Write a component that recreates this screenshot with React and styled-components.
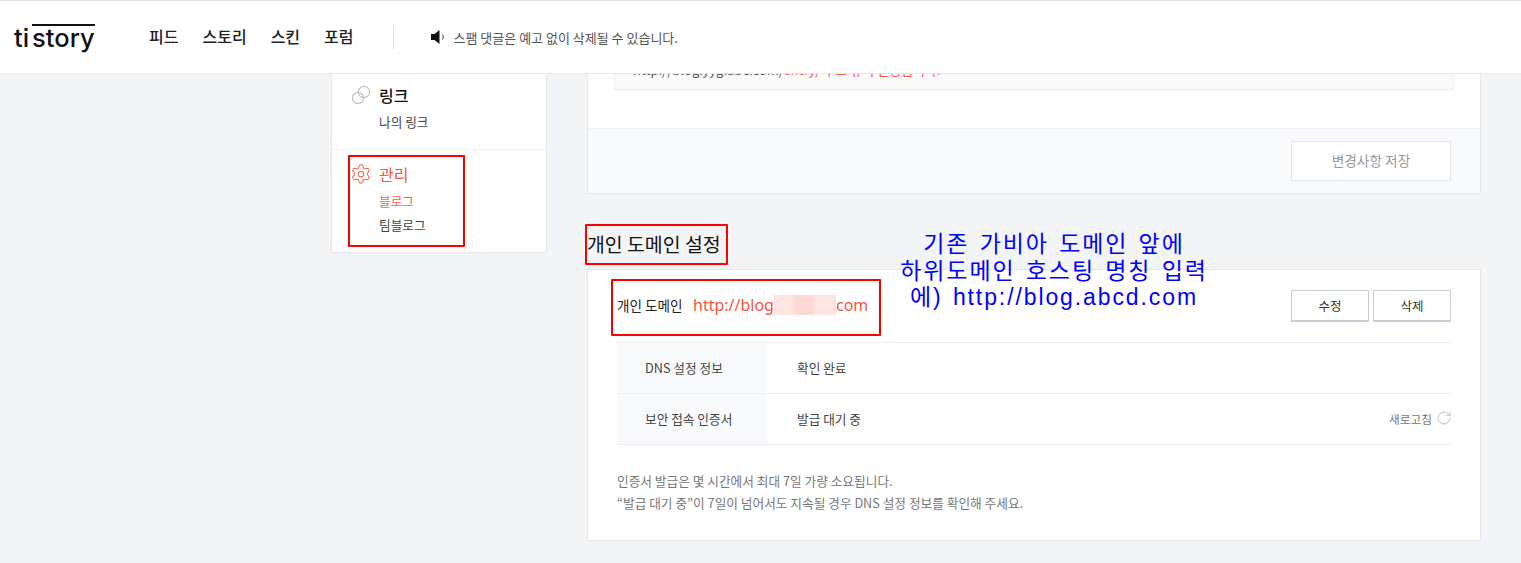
import React from "react";
import styled, { createGlobalStyle } from "styled-components";
import { RotateCw, Settings } from "lucide-react";

const GlobalStyle = createGlobalStyle`
    html, body {
        margin: 0;
        padding: 0;
        background: #f3f4f6;
    }
    * {
        box-sizing: border-box;
    }
`;

const FONT = `"Noto Sans CJK KR", "Noto Sans", sans-serif`;

const Page = styled.div`
    position: relative;
    width: 1521px;
    height: 563px;
    overflow: hidden;
    font-family: ${FONT};
    background: #f3f4f6;
`;

//header
const Header = styled.header`
    position: absolute;
    top: 0;
    left: 0;
    z-index: 5;
    width: 100%;
    height: 74px;
    display: flex;
    align-items: center;
    padding: 0 0 0 14px;
    background: #fff;
    border-top: 1px solid #e2e2e2;
    border-bottom: 1px solid #e6e7ea;
`;

const Logo = styled.div`
    width: 135px;
    font-family: "Inter", sans-serif;
    font-size: 25.5px;
    font-weight: 500;
    line-height: 24px;
    color: #111;
`;

const LogoBar = styled.span`
    display: inline-block;
    border-top: 2px solid #111;
    margin-left: 3px;
`;

const Nav = styled.nav`
    display: flex;
    gap: 24px;
    padding: 0 39px 2px 0;
    font-size: 16px;
    font-weight: 500;
    color: #222;
`;

const Divider = styled.div`
    width: 1px;
    height: 24px;
    background: #dfe0e3;
    margin-right: 37px;
`;

const Notice = styled.div`
    display: flex;
    align-items: center;
    gap: 9px;
    font-size: 13px;
    color: #555;
`;

//main layout
const Main = styled.main`
    display: flex;
    align-items: flex-start;
    gap: 40px;
    padding-left: 331px;
`;

const Sidebar = styled.aside`
    width: 216px;
    height: 253px;
    padding-top: 74px;
    background: #fff;
    border: 1px solid #e4e7ee;
    border-top: 0;
`;

const SideGroup = styled.div`
    height: ${(p) => p.$height}px;
    padding: ${(p) => p.$top}px 0 0 19px;
    border-bottom: ${(p) => (p.$last ? "0" : "1px solid #eef0f3")};
`;

const SideTitle = styled.div`
    display: flex;
    align-items: center;
    gap: 8px;
    height: 24px;
    font-size: 16px;
    font-weight: ${(p) => (p.$active ? 400 : 500)};
    color: ${(p) => (p.$active ? "#f9543c" : "#111")};
`;

const SideLink = styled.div`
    margin: ${(p) => p.$gap}px 0 0 28px;
    height: 16px;
    line-height: 16px;
    font-size: 12.7px;
    color: ${(p) => (p.$active ? "#f9603f" : "#444")};
`;

const Content = styled.div`
    width: 894px;
    display: flex;
    flex-direction: column;
`;

const Panel = styled.section`
    background: #fff;
    border: 1px solid #e4e7ee;
`;

const TopPanel = styled(Panel)`
    height: 194px;
    border-top: 0;
`;

const PanelBody = styled.div`
    height: 128px;
    padding: 56px 26px 0;
`;

const CodeBox = styled.div`
    height: 34px;
    padding: 6px 0 0 18px;
    font-size: 13px;
    line-height: 16px;
    color: #555;
    background: #f9fafc;
    border: 1px solid #eef0f3;
    border-top: 0;
`;

const CodeRed = styled.span`
    color: #f9543c;
`;

const PanelFoot = styled.div`
    height: 65px;
    display: flex;
    align-items: center;
    justify-content: flex-end;
    padding: 0 29px 0 0;
    background: #f9fafc;
    border-top: 1px solid #eef0f3;
`;

const SaveButton = styled.button`
    width: 160px;
    height: 40px;
    padding-bottom: 3px;
    font-family: ${FONT};
    font-size: 13.7px;
    color: #999;
    background: #fff;
    border: 1px solid #e2e6ee;
`;

const SectionTitle = styled.h3`
    margin: 0;
    height: 75px;
    padding-top: 37px;
    font-size: 19.4px;
    line-height: 26px;
    font-weight: 400;
    color: #111;
`;

const DomainPanel = styled(Panel)`
    height: 272px;
    padding: 0 29px;
`;

const DomainRow = styled.div`
    display: flex;
    align-items: center;
    height: 73px;
    border-bottom: 1px solid #eceef1;
`;

const DomainLabel = styled.span`
    width: 76px;
    padding-bottom: 2px;
    font-size: 13.6px;
    color: #222;
`;

const DomainValue = styled.span`
    display: flex;
    align-items: center;
    padding-bottom: 2px;
    font-size: 16px;
    color: #f9543c;
    font-family: "Noto Sans", sans-serif;
`;

const Mask = styled.i`
    display: block;
    width: ${(p) => p.$width}px;
    height: 20px;
    background: ${(p) => p.$color};
`;

const Actions = styled.div`
    display: flex;
    gap: 4px;
    margin-left: auto;
`;

const SmallButton = styled.button`
    width: 78px;
    height: 32px;
    font-family: ${FONT};
    font-size: 12.5px;
    color: #333;
    background: #fff;
    border: 1px solid #c5ced9;
    border-bottom-width: 2px;
`;

const InfoRow = styled.div`
    display: flex;
    align-items: center;
    height: 51px;
    padding: 0;
    border-bottom: 1px solid #eceef1;
`;

const InfoHead = styled.div`
    width: 150px;
    height: 100%;
    display: flex;
    align-items: center;
    padding: 0 0 2px 28px;
    font-size: 12.7px;
    color: #444;
    background: #f9fafc;
`;

const InfoValue = styled.div`
    padding: 0 0 2px 30px;
    font-size: 12.7px;
    color: #444;
`;

const Refresh = styled.div`
    display: flex;
    align-items: center;
    gap: 4px;
    margin: 0 -1px 2px auto;
    font-size: 11.7px;
    color: #777;
`;

const Notes = styled.div`
    padding-top: 25px;
    font-size: 12.7px;
    line-height: 22px;
    color: #777;
`;

//annotations drawn over the capture
const RedBox = styled.div`
    position: absolute;
    z-index: 3;
    left: ${(p) => p.$x}px;
    top: ${(p) => p.$y}px;
    width: ${(p) => p.$w}px;
    height: ${(p) => p.$h}px;
    border: 2px solid #f00;
    border-radius: 1px;
`;

const BlueNote = styled.div`
    position: absolute;
    z-index: 3;
    left: 854px;
    top: 231px;
    width: 400px;
    text-align: center;
    font-family: "Liberation Sans", "Noto Sans CJK KR", sans-serif;
    font-size: 23px;
    line-height: 26.5px;
    letter-spacing: 1.9px;
    word-spacing: 2px;
    color: #0000ff;
`;

const Speaker = () => (
    <svg width="14" height="14" viewBox="0 0 14 14">
        <path d="M0 4h3.5L8.5 0v14l-5-4H0z" fill="#111" />
        <path d="M11.5 4.5c1 1.6 1 3.4 0 5" fill="none" stroke="#333" strokeWidth="1" />
    </svg>
);

const LinkIcon = () => (
    <svg width="20" height="20" viewBox="0 0 20 20" fill="none" stroke="#c2c2c2" strokeWidth="1.2">
        <circle cx="7" cy="13" r="5.6" />
        <circle cx="13" cy="7" r="5.6" />
    </svg>
);

function App() {
    return (
        <Page>
            <GlobalStyle />
            <Header>
                <Logo>ti<LogoBar>story</LogoBar></Logo>
                <Nav>
                    <span>피드</span>
                    <span>스토리</span>
                    <span>스킨</span>
                    <span>포럼</span>
                </Nav>
                <Divider />
                <Notice>
                    <Speaker />
                    스팸 댓글은 예고 없이 삭제될 수 있습니다.
                </Notice>
            </Header>

            <Main>
                <Sidebar>
                    <SideGroup $height={76} $top={9}>
                        <SideTitle><LinkIcon />링크</SideTitle>
                        <SideLink $gap={7}>나의 링크</SideLink>
                    </SideGroup>
                    <SideGroup $height={103} $top={12} $last>
                        <SideTitle $active><Settings size={22} strokeWidth={1.1} color="#f9604a" style={{ margin: "0 -1px" }} />관리</SideTitle>
                        <SideLink $gap={7} $active>블로그</SideLink>
                        <SideLink $gap={8}>팀블로그</SideLink>
                    </SideGroup>
                </Sidebar>

                <Content>
                    <TopPanel>
                        <PanelBody>
                            <CodeBox>http://blog.yyg.abc.com/<CodeRed>entry/ 주소 규칙 변경됩니다.</CodeRed></CodeBox>
                        </PanelBody>
                        <PanelFoot>
                            <SaveButton>변경사항 저장</SaveButton>
                        </PanelFoot>
                    </TopPanel>

                    <SectionTitle>개인 도메인 설정</SectionTitle>

                    <DomainPanel>
                        <DomainRow>
                            <DomainLabel>개인 도메인</DomainLabel>
                            <DomainValue>
                                http://blog
                                <Mask $width={20} $color="#ffe4e0" />
                                <Mask $width={20} $color="#ffdad5" />
                                <Mask $width={22} $color="#ffe4e4" />
                                com
                            </DomainValue>
                            <Actions>
                                <SmallButton>수정</SmallButton>
                                <SmallButton>삭제</SmallButton>
                            </Actions>
                        </DomainRow>
                        <InfoRow>
                            <InfoHead>DNS 설정 정보</InfoHead>
                            <InfoValue>확인 완료</InfoValue>
                        </InfoRow>
                        <InfoRow>
                            <InfoHead>보안 접속 인증서</InfoHead>
                            <InfoValue>발급 대기 중</InfoValue>
                            <Refresh>새로고침 <RotateCw size={16} strokeWidth={1.1} color="#a9adb5" /></Refresh>
                        </InfoRow>
                        <Notes>
                            인증서 발급은 몇 시간에서 최대 7일 가량 소요됩니다.<br />
                            “발급 대기 중”이 7일이 넘어서도 지속될 경우 DNS 설정 정보를 확인해 주세요.
                        </Notes>
                    </DomainPanel>
                </Content>
            </Main>

            <RedBox $x={348} $y={155} $w={117} $h={92} />
            <RedBox $x={585} $y={224} $w={143} $h={41} />
            <RedBox $x={611} $y={279} $w={270} $h={57} />
            <BlueNote>
                기존 가비아 도메인 앞에<br />
                하위도메인 호스팅 명칭 입력<br />
                에) http://blog.abcd.com
            </BlueNote>
        </Page>
    );
}

export default App;
